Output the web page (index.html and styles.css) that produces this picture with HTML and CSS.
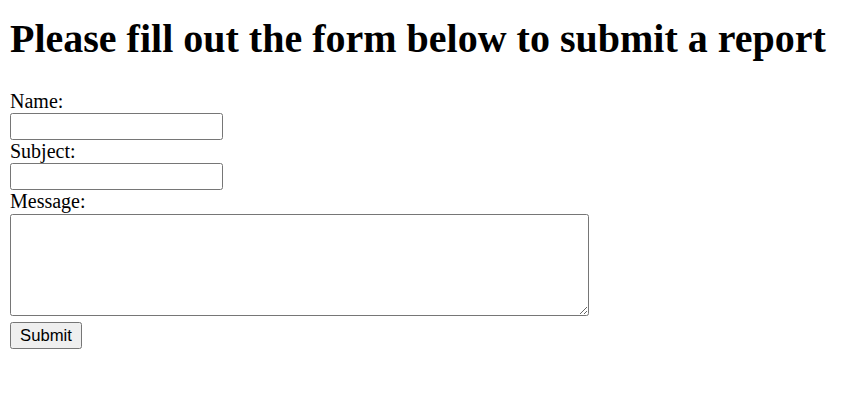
FILE: index.html
```html
<!DOCTYPE html>
<html>
<head>
<meta charset="utf-8">
<title>Report</title>
<link rel="stylesheet" href="styles.css">
</head>
<body class="page">
<h1 class="title">Please fill out the form below to submit a report</h1>
<form class="report-form">
<label class="field-label" for="name">Name:</label>
<input class="text-input" type="text" id="name" name="name">
<label class="field-label" for="subject">Subject:</label>
<input class="text-input" type="text" id="subject" name="subject">
<label class="field-label" for="message">Message:</label>
<textarea class="message-input" id="message" name="message"></textarea>
<button class="submit-btn" type="submit">Submit</button>
</form>
</body>
</html>
```

FILE: styles.css
```css
html, body {
  background: #fff;
}
.page {
  margin: 0 10px;
  font-family: "Liberation Serif", "Times New Roman", serif;
  font-size: 20px;
  color: #000;
}
.title {
  font-size: 40px;
  line-height: 46px;
  font-weight: bold;
  margin: 16px 0 28px;
}
.report-form {
  margin: 0;
  display: flex;
  flex-direction: column;
  align-items: flex-start;
}
.field-label {
  font-size: 20px;
  line-height: 23px;
  height: 23px;
}
.text-input {
  box-sizing: border-box;
  width: 213px;
  height: 27px;
  margin: 0;
  padding: 1px 3px;
  border: 1px solid #767676;
  border-radius: 2.5px;
  background: #fff;
  font-family: "Liberation Sans", Arial, sans-serif;
  font-size: 16.67px;
}
.message-input {
  box-sizing: border-box;
  width: 579px;
  height: 102px;
  margin: 1px 0 0;
  padding: 2px;
  border: 1px solid #767676;
  border-radius: 2.5px;
  background: #fff;
  font-family: "Liberation Mono", monospace;
  font-size: 16.67px;
  resize: both;
}
.submit-btn {
  box-sizing: border-box;
  width: 72px;
  height: 27px;
  margin-top: 6px;
  padding: 1px 7px;
  border: 1px solid #767676;
  border-radius: 2.5px;
  background: #efefef;
  font-family: "Liberation Sans", Arial, sans-serif;
  font-size: 16.67px;
  color: #000;
}
```
